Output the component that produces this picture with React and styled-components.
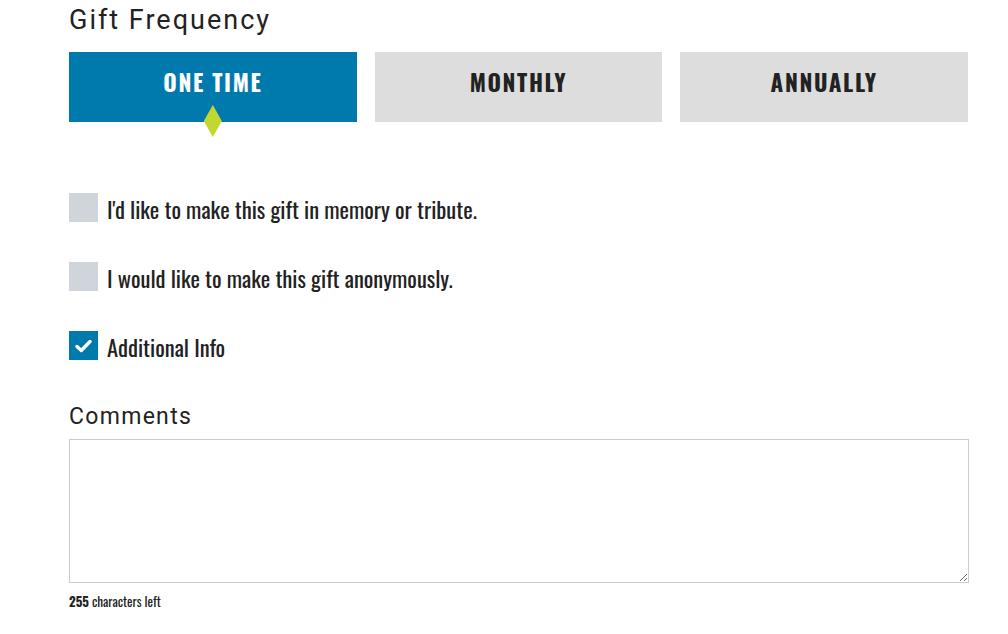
import React, { useState } from "react";
import styled, { createGlobalStyle } from "styled-components";

const CONDENSED = `"Oswald", "Liberation Sans Narrow", "DejaVu Sans Condensed", "Roboto Condensed", "Liberation Sans", sans-serif`;

const GlobalStyle = createGlobalStyle`
  body {
    margin: 0;
    background: #fff;
    font-family: Roboto, "Liberation Sans", sans-serif;
    color: #222;
  }
`;

const FREQUENCIES = ["One Time", "Monthly", "Annually"];

const OPTIONS = [
  { id: "tribute", label: "I'd like to make this gift in memory or tribute." },
  { id: "anon", label: "I would like to make this gift anonymously." },
  { id: "info", label: "Additional Info" },
];

const App = () => {
  const [frequency, setFrequency] = useState("One Time");
  const [checked, setChecked] = useState({ info: true });
  const [comment, setComment] = useState("");

  const toggle = id => setChecked(prev => ({ ...prev, [id]: !prev[id] }));

  return (
    <Page>
      <GlobalStyle />
      <Heading>Gift Frequency</Heading>
      <Tabs>
        {FREQUENCIES.map(f => (
          <Tab key={f} active={f === frequency} onClick={() => setFrequency(f)}>
            {f}
          </Tab>
        ))}
      </Tabs>

      <Options>
        {OPTIONS.map(o => (
          <Option key={o.id} onClick={() => toggle(o.id)}>
            <Box checked={!!checked[o.id]}>
              {checked[o.id] && (
                <svg width="17" height="14" viewBox="0 0 17 14">
                  <path
                    d="M2 7.5 L6.3 11.5 L15 2.5"
                    fill="none"
                    stroke="#fff"
                    strokeWidth="3.4"
                    strokeLinecap="round"
                    strokeLinejoin="round"
                  />
                </svg>
              )}
            </Box>
            <OptionLabel>{o.label}</OptionLabel>
          </Option>
        ))}
      </Options>

      <CommentsHeading>Comments</CommentsHeading>
      <Comments
        value={comment}
        maxLength={255}
        onChange={e => setComment(e.target.value)}
      />
      <Counter>
        <b>{255 - comment.length}</b> characters left
      </Counter>
    </Page>
  );
};

const Page = styled.div`
  width: 899px;
  padding: 3px 0 0 69px;
`;

const Heading = styled.h2`
  margin: 0;
  font-family: Roboto, "Liberation Sans", sans-serif;
  font-weight: 400;
  font-size: 27px;
  letter-spacing: 2px;
  line-height: 34px;
  color: #222;
`;

const Tabs = styled.div`
  display: grid;
  grid-template-columns: repeat(3, 1fr);
  column-gap: 18px;
  margin-top: 15px;
`;

const Tab = styled.button`
  position: relative;
  height: 70px;
  border: none;
  padding: 0 0 10px;
  cursor: pointer;
  background: ${p => (p.active ? "#007aad" : "#dddddd")};
  color: ${p => (p.active ? "#fff" : "#222")};
  font-family: ${CONDENSED};
  font-weight: 700;
  font-size: 23px;
  letter-spacing: 1.6px;
  text-transform: uppercase;

  &::after {
    content: "";
    display: ${p => (p.active ? "block" : "none")};
    position: absolute;
    left: 50%;
    top: 53px;
    width: 18px;
    height: 32px;
    margin-left: -9px;
    background: #c2d82e;
    clip-path: polygon(50% 0, 100% 50%, 50% 100%, 0 50%);
  }
`;

const Options = styled.div`
  display: flex;
  flex-direction: column;
  gap: 40px;
  margin-top: 71px;
`;

const Option = styled.label`
  display: flex;
  align-items: flex-start;
  gap: 9px;
  cursor: pointer;
`;

const Box = styled.span`
  flex: none;
  width: 29px;
  height: 29px;
  display: flex;
  align-items: center;
  justify-content: center;
  background: ${p => (p.checked ? "#007aad" : "#d0d5dc")};
`;

const OptionLabel = styled.span`
  font-family: ${CONDENSED};
  font-size: 22.5px;
  line-height: 25px;
  padding-top: 4px;
  height: 25px;
  color: #222;
`;

const CommentsHeading = styled.h3`
  margin: 42px 0 0;
  font-family: Roboto, "Liberation Sans", sans-serif;
  font-weight: 400;
  font-size: 23px;
  letter-spacing: 1.3px;
  line-height: 30px;
  color: #222;
`;

const Comments = styled.textarea`
  display: block;
  box-sizing: border-box;
  width: 900px;
  height: 144px;
  margin-top: 7px;
  border: 1px solid #cccccc;
  font-family: Roboto, "Liberation Sans", sans-serif;
  font-size: 14px;
`;

const Counter = styled.div`
  margin-top: 8px;
  font-family: ${CONDENSED};
  font-size: 13px;
  color: #222;

  b {
    font-weight: 700;
  }
`;

export default App;
